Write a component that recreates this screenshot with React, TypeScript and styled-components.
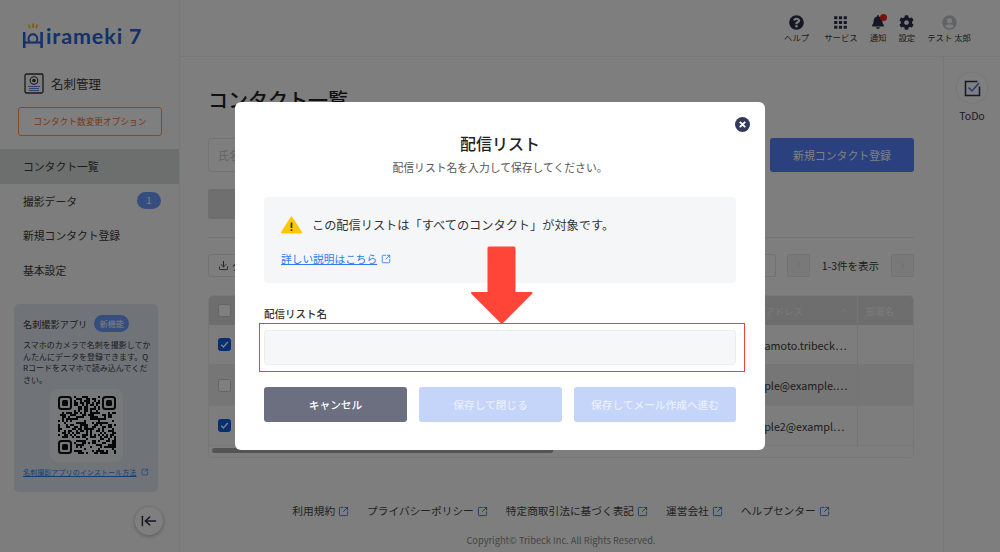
import React from "react"
import styled, { createGlobalStyle } from "styled-components"
import { ArrowLeftToLine, ChevronLeft, ChevronRight, ChevronUp, Download, SquareArrowOutUpRight } from "lucide-react"
import { FaBell, FaCog, FaQuestionCircle, FaUserCircle } from "react-icons/fa"
import { MdApps } from "react-icons/md"

const GlobalStyle = createGlobalStyle`
  html, body {
    margin: 0;
    height: 100%;
    overflow: hidden;
  }
  body {
    font-family: "Noto Sans CJK JP", "Noto Sans", sans-serif;
    color: #3a3a3a;
    background: #fdfdfd;
  }
  * {
    box-sizing: border-box;
  }
`

const Page = styled.div`
  display: flex;
  width: 1000px;
  height: 552px;
  overflow: hidden;
`

const Sidebar = styled.aside`
  width: 180px;
  flex: none;
  padding-top: 21px;
  background: #fbfbfb;
  border-right: 1px solid #f0f0f0;
  display: flex;
  flex-direction: column;
`

const Logo = styled.div`
  display: flex;
  align-items: flex-end;
  height: 28px;
  margin-left: 22px;
  color: #2a62d8;
`

const LogoName = styled.span`
  font-family: "Lato", sans-serif;
  font-size: 21.5px;
  line-height: 26px;
  font-weight: 700;
  letter-spacing: 0.9px;
  margin-left: 2px;
`

const ProductRow = styled.div`
  display: flex;
  align-items: center;
  gap: 7px;
  margin: 23px 0 0 24px;
  font-size: 12.5px;
  height: 22px;
`

const OptionButton = styled.button`
  display: block;
  width: 144px;
  height: 29px;
  margin: 13px 0 13px 18px;
  padding: 0;
  border: 1px solid #ff9a45;
  border-radius: 3px;
  background: #fff;
  color: #f0702a;
  font: inherit;
  font-size: 8.7px;
`

const NavItem = styled.div<{ $active?: boolean }>`
  display: flex;
  align-items: center;
  justify-content: space-between;
  height: 34.5px;
  padding: 0 18px 0 23px;
  font-size: 10.8px;
  background: ${(p) => (p.$active ? "#d8dedb" : "transparent")};
`

const CountBadge = styled.span`
  width: 24px;
  height: 17px;
  border-radius: 9px;
  background: #6a9cff;
  color: #fff;
  font-size: 9.5px;
  line-height: 17px;
  text-align: center;
`

const AppCard = styled.section`
  width: 144px;
  height: 188px;
  margin: 17px 0 0 14px;
  padding: 11px 9px;
  border-radius: 5px;
  background: #e0e8f2;
`

const AppTitle = styled.div`
  display: flex;
  align-items: center;
  gap: 7px;
  font-size: 9.2px;
  height: 17px;
`

const NewPill = styled.span`
  width: 35px;
  height: 17px;
  border-radius: 9px;
  background: #6a9cff;
  color: #fff;
  font-size: 8px;
  line-height: 17px;
  text-align: center;
`

const AppText = styled.p`
  margin: 7px 0 0;
  width: 128px;
  font-size: 8px;
  line-height: 11.5px;
  word-break: break-all;
`

const QrBox = styled.div`
  width: 73px;
  height: 73px;
  margin: 4px 0 0 27px;
  padding: 7px 7.5px;
  border-radius: 8px;
  background: #eef1f5;
  svg {
    display: block;
  }
`

const AppLink = styled.a`
  display: flex;
  align-items: center;
  gap: 5px;
  margin-top: 5px;
  font-size: 7.1px;
  color: #2f7bf0;
  white-space: nowrap;
  span {
    text-decoration: underline;
  }
`

const CollapseButton = styled.button`
  width: 28px;
  height: 28px;
  margin: 15px 0 0 135px;
  padding: 0;
  display: flex;
  align-items: center;
  justify-content: center;
  border: none;
  border-radius: 50%;
  background: #fff;
  color: #2b2f4a;
  box-shadow: 0 1px 4px rgba(0, 0, 0, 0.3);
`

const Main = styled.div`
  flex: 1;
  min-width: 0;
  display: flex;
  flex-direction: column;
`

const Header = styled.header`
  height: 57px;
  flex: none;
  display: flex;
  justify-content: flex-end;
  gap: 12px;
  padding: 14px 29px 0 0;
  border-bottom: 1px solid #f0f0f0;
`

const HeaderItem = styled.div<{ $wide?: boolean }>`
  display: flex;
  flex-direction: column;
  align-items: center;
  gap: 1px;
  margin-left: ${(p) => (p.$wide ? "3px" : "0")};
  font-size: 8.4px;
  line-height: 13px;
  white-space: nowrap;
`

const IconSlot = styled.span`
  position: relative;
  height: 16px;
  display: flex;
  align-items: center;
  color: #2b2f4a;
`

const BellDot = styled.i`
  position: absolute;
  top: 0;
  right: -2px;
  width: 7px;
  height: 7px;
  border-radius: 50%;
  background: #f02020;
`

const Body = styled.div`
  flex: 1;
  min-height: 0;
  display: flex;
`

const Content = styled.main`
  flex: 1;
  min-width: 0;
  padding: 29px 29px 0 28px;
`

const PageTitle = styled.h1`
  margin: 0;
  height: 28px;
  font-size: 20px;
  line-height: 28px;
  font-weight: 500;
  color: #222;
`

const SearchRow = styled.div`
  display: flex;
  justify-content: space-between;
  margin-top: 24px;
`

const SearchInput = styled.div`
  width: 400px;
  height: 34px;
  padding: 0 9px;
  border: 1px solid #e8e8e8;
  border-radius: 3px;
  font-size: 11px;
  line-height: 32px;
  color: #c8c8c8;
`

const PrimaryButton = styled.button`
  width: 144px;
  height: 34px;
  padding: 0;
  border: none;
  border-radius: 3px;
  background: #5480ff;
  color: #fff;
  font: inherit;
  font-size: 10.9px;
`

const FilterButton = styled.div`
  width: 200px;
  height: 30px;
  margin-top: 17px;
  border-radius: 3px;
  background: #dcdedd;
`

const Divider = styled.hr`
  margin: 18px 0 16px;
  border: none;
  border-top: 1px solid #eaeaea;
`

const ToolRow = styled.div`
  display: flex;
  align-items: center;
  height: 23px;
  font-size: 10.5px;
`

const DownloadButton = styled.div`
  display: flex;
  align-items: center;
  gap: 3px;
  height: 23px;
  padding: 0 10px 0 9px;
  border: 1px solid #e4e4e4;
  border-radius: 3px;
`

const Pager = styled.div`
  margin-left: auto;
  display: flex;
  align-items: center;
  gap: 12px;
`

const PageSizeBox = styled.span`
  width: 40px;
  height: 23px;
  margin-right: -1px;
  border: 1px solid #e4e4e4;
  border-radius: 2px;
`

const PageButton = styled.span`
  width: 23px;
  height: 23px;
  display: flex;
  align-items: center;
  justify-content: center;
  border: 1px solid #e4e4e4;
  border-radius: 2px;
  background: #f2f2f2;
  color: #d4d4d4;
`

const Table = styled.div`
  margin-top: 18px;
  height: 163px;
  border: 1px solid #eeeeee;
  border-radius: 5px;
  overflow: hidden;
  position: relative;
`

const TableRow = styled.div<{ $head?: boolean; $shade?: boolean; $h: number }>`
  display: grid;
  grid-template-columns: 28px 1fr 120px 56px;
  height: ${(p) => p.$h}px;
  align-items: center;
  font-size: ${(p) => (p.$head ? "9.4px" : "10.8px")};
  color: ${(p) => (p.$head ? "#f6f6f6" : "#3a3a3a")};
  background: ${(p) => (p.$head ? "#dcdcdc" : p.$shade ? "#ececec" : "#fbfbfb")};
  border-bottom: ${(p) => (p.$head ? "none" : "1px solid #eeeeee")};
`

const CheckBox = styled.span<{ $checked?: boolean }>`
  width: 13px;
  height: 13px;
  margin-left: 9px;
  display: flex;
  align-items: center;
  justify-content: center;
  border-radius: 2.5px;
  border: 1px solid ${(p) => (p.$checked ? "#0b5fe0" : "#c8c8c8")};
  background: ${(p) => (p.$checked ? "#0b5fe0" : "#fff")};
`

const MailCell = styled.span`
  padding-left: 6px;
  white-space: nowrap;
`

const MailHead = styled.span`
  display: flex;
  align-items: center;
  justify-content: space-between;
  padding-right: 8px;
`

const DeptCell = styled.span`
  height: 100%;
  padding-left: 8px;
  display: flex;
  align-items: center;
  border-left: 1px solid #e8e8e8;
`

const ScrollThumb = styled.div`
  position: absolute;
  left: 3px;
  bottom: 4px;
  width: 341px;
  height: 5px;
  border-radius: 3px;
  background: #a8a8a8;
`

const Footer = styled.footer`
  margin-top: 45px;
  text-align: center;
`

const FooterLinks = styled.div`
  display: flex;
  justify-content: center;
  gap: 18px;
  font-size: 10.7px;
  line-height: 16px;
`

const FooterLink = styled.a`
  display: flex;
  align-items: center;
  gap: 3px;
  color: #444;
  svg {
    color: #2f6fe8;
  }
`

const Copyright = styled.div`
  margin-top: 15px;
  font-size: 9.3px;
  line-height: 13px;
  color: #8a8a8a;
`

const TodoRail = styled.aside`
  width: 57px;
  flex: none;
  padding-top: 16px;
  border-left: 1px solid #f0f0f0;
  display: flex;
  flex-direction: column;
  align-items: center;
  font-size: 10.5px;
`

const TodoCircle = styled.div`
  width: 30px;
  height: 30px;
  border-radius: 50%;
  background: #fff;
  box-shadow: 0 0 3px rgba(0, 0, 0, 0.12);
  display: flex;
  align-items: center;
  justify-content: center;
  margin-bottom: 5px;
`

const Overlay = styled.div`
  position: fixed;
  inset: 0;
  background: rgba(0, 0, 0, 0.5);
  display: flex;
  align-items: center;
  justify-content: center;
`

const Modal = styled.div`
  position: relative;
  width: 530px;
  height: 348px;
  padding: 29px 29px 0;
  border-radius: 6px;
  background: #fff;
`

const CloseIcon = styled.svg`
  position: absolute;
  top: 15px;
  right: 15px;
`

const ModalTitle = styled.h2`
  margin: 0;
  font-size: 16px;
  line-height: 24px;
  font-weight: 500;
  text-align: center;
  color: #222;
`

const ModalSub = styled.p`
  margin: 4px 0 0;
  font-size: 10.8px;
  line-height: 16px;
  text-align: center;
  color: #555;
`

const Notice = styled.div`
  height: 86px;
  margin-top: 22px;
  padding: 17px 17px 0;
  border-radius: 4px;
  background: #f5f6f8;
`

const NoticeRow = styled.div`
  display: flex;
  align-items: center;
  gap: 10px;
  height: 22px;
  font-size: 12.2px;
  color: #333;
`

const NoticeLink = styled.a`
  display: flex;
  align-items: center;
  gap: 4px;
  margin-top: 15px;
  font-size: 10.7px;
  line-height: 16px;
  color: #2f7bf0;
  span {
    text-decoration: underline;
  }
`

const FieldLabel = styled.label`
  display: block;
  margin-top: 23px;
  font-size: 10.5px;
  line-height: 16px;
  font-weight: 500;
  color: #333;
`

const FieldInput = styled.div`
  height: 35px;
  margin-top: 8px;
  border: 1px solid #eceef0;
  border-radius: 3px;
  background: #f6f7f9;
`

const Actions = styled.div`
  display: grid;
  grid-template-columns: 143px 143px 1fr;
  gap: 12px;
  margin-top: 22px;
`

const ActionButton = styled.button<{ $cancel?: boolean }>`
  height: 35px;
  padding: 0;
  border: none;
  border-radius: 3px;
  background: ${(p) => (p.$cancel ? "#6c6f80" : "#c5d5f9")};
  color: ${(p) => (p.$cancel ? "#fff" : "#e9effd")};
  font: inherit;
  font-size: 10.7px;
  font-weight: 500;
`

const Highlight = styled.div`
  position: absolute;
  left: 24px;
  top: 221px;
  width: 486px;
  height: 49px;
  border: 1px solid #ef4136;
  pointer-events: none;
`

const ArrowMark = styled.svg`
  position: absolute;
  left: 235px;
  top: 144px;
`

const CardIcon = () => (
  <svg width="20" height="21" viewBox="0 0 20 21" fill="none">
    <rect x="1" y="1" width="18" height="19" rx="1.5" stroke="#333" strokeWidth="1.3" />
    <circle cx="10" cy="7.5" r="3.8" stroke="#333" strokeWidth="1.1" />
    <circle cx="10" cy="7.5" r="1.8" fill="#333" />
    <path d="M4 13.5h12M5 15.5h10M5 17.5h10" stroke="#5f86d8" strokeWidth="1" />
  </svg>
)

const LogoMark = () => (
  <svg width="22" height="26" viewBox="0 0 22 26" fill="none">
    <path d="M2.2 9v16M19.6 9v16" stroke="#2a62d8" strokeWidth="2.6" />
    <path d="M2.2 19.5h17.4" stroke="#2a62d8" strokeWidth="2.2" />
    <path d="M7.5 18.5a4.4 4.4 0 1 1 6.8 0" stroke="#2a62d8" strokeWidth="2.1" />
    <path d="M6.5 1.5l1.5 3.6M11 0.5v4.4M15.5 1.5l-1.6 3.6" stroke="#f2c230" strokeWidth="1.9" />
  </svg>
)

// not a real code, just looks like one at this size
const qrFill = (x: number, y: number) => {
  const n = (x * 7919 + y * 104729 + x * y * 31) % 97
  return n % 5 < 2 || (x + y * 3) % 7 === 0
}

const inFinder = (x: number, y: number) =>
  (x < 8 && y < 8) || (x > 20 && y < 8) || (x < 8 && y > 20)

const QrCode = () => {
  const cells: React.ReactNode[] = []
  for (let y = 0; y < 29; y++) {
    for (let x = 0; x < 29; x++) {
      if (!inFinder(x, y) && qrFill(x, y)) {
        cells.push(<rect key={`${x}-${y}`} x={x * 2} y={y * 2} width="2" height="2" fill="#111" />)
      }
    }
  }
  const finders = [
    [0, 0],
    [44, 0],
    [0, 44],
  ]
  return (
    <svg width="58" height="58" viewBox="0 0 58 58">
      {cells}
      {finders.map(([fx, fy]) => (
        <g key={`${fx}-${fy}`}>
          <rect x={fx + 1} y={fy + 1} width="12" height="12" rx="2.5" fill="none" stroke="#111" strokeWidth="2" />
          <rect x={fx + 4} y={fy + 4} width="6" height="6" rx="1.5" fill="#111" />
        </g>
      ))}
    </svg>
  )
}

const Check = () => (
  <svg width="9" height="9" viewBox="0 0 9 9" fill="none">
    <path d="M1.2 4.8l2.2 2.2 4.4-5" stroke="#fff" strokeWidth="1.4" />
  </svg>
)

const footerLinks = ["利用規約", "プライバシーポリシー", "特定商取引法に基づく表記", "運営会社", "ヘルプセンター"]

const App = () => (
  <>
    <GlobalStyle />
    <Page>
      <Sidebar>
        <Logo>
          <LogoMark />
          <LogoName>irameki 7</LogoName>
        </Logo>
        <ProductRow>
          <CardIcon />
          名刺管理
        </ProductRow>
        <OptionButton>コンタクト数変更オプション</OptionButton>
        <NavItem $active>コンタクト一覧</NavItem>
        <NavItem>
          撮影データ
          <CountBadge>1</CountBadge>
        </NavItem>
        <NavItem>新規コンタクト登録</NavItem>
        <NavItem>基本設定</NavItem>
        <AppCard>
          <AppTitle>
            名刺撮影アプリ
            <NewPill>新機能</NewPill>
          </AppTitle>
          <AppText>スマホのカメラで名刺を撮影してかんたんにデータを登録できます。QRコードをスマホで読み込んでください。</AppText>
          <QrBox>
            <QrCode />
          </QrBox>
          <AppLink>
            <span>名刺撮影アプリのインストール方法</span>
            <SquareArrowOutUpRight size={8} />
          </AppLink>
        </AppCard>
        <CollapseButton>
          <ArrowLeftToLine size={16} style={{ transform: "scaleX(1.1)" }} />
        </CollapseButton>
      </Sidebar>
      <Main>
        <Header>
          <HeaderItem>
            <IconSlot>
              <FaQuestionCircle size={15} />
            </IconSlot>
            ヘルプ
          </HeaderItem>
          <HeaderItem $wide>
            <IconSlot>
              <MdApps size={19} />
            </IconSlot>
            サービス
          </HeaderItem>
          <HeaderItem>
            <IconSlot>
              <FaBell size={14} />
              <BellDot />
            </IconSlot>
            通知
          </HeaderItem>
          <HeaderItem>
            <IconSlot>
              <FaCog size={15} />
            </IconSlot>
            設定
          </HeaderItem>
          <HeaderItem>
            <IconSlot style={{ color: "#c4c6cc" }}>
              <FaUserCircle size={15} />
            </IconSlot>
            テスト 太郎
          </HeaderItem>
        </Header>
        <Body>
          <Content>
            <PageTitle>コンタクト一覧</PageTitle>
            <SearchRow>
              <SearchInput>氏名</SearchInput>
              <PrimaryButton>新規コンタクト登録</PrimaryButton>
            </SearchRow>
            <FilterButton />
            <Divider />
            <ToolRow>
              <DownloadButton>
                <Download size={11} />
                ダウンロード
              </DownloadButton>
              <Pager>
                <PageSizeBox />
                <PageButton>
                  <ChevronLeft size={9} />
                </PageButton>
                1-3件を表示
                <PageButton>
                  <ChevronRight size={9} />
                </PageButton>
              </Pager>
            </ToolRow>
            <Table>
              <TableRow $head $h={29}>
                <CheckBox />
                <span />
                <MailHead>
                  メールアドレス
                  <ChevronUp size={11} />
                </MailHead>
                <DeptCell>部署名</DeptCell>
              </TableRow>
              <TableRow $h={40}>
                <CheckBox $checked>
                  <Check />
                </CheckBox>
                <span />
                <MailCell>yamamoto.tribeck⋯</MailCell>
                <DeptCell />
              </TableRow>
              <TableRow $shade $h={41}>
                <CheckBox />
                <span />
                <MailCell>sample@example.⋯</MailCell>
                <DeptCell />
              </TableRow>
              <TableRow $h={40}>
                <CheckBox $checked>
                  <Check />
                </CheckBox>
                <span />
                <MailCell>sample2@exampl⋯</MailCell>
                <DeptCell />
              </TableRow>
              <ScrollThumb />
            </Table>
            <Footer>
              <FooterLinks>
                {footerLinks.map((label) => (
                  <FooterLink key={label}>
                    {label}
                    <SquareArrowOutUpRight size={11} />
                  </FooterLink>
                ))}
              </FooterLinks>
              <Copyright>Copyright© Tribeck Inc. All Rights Reserved.</Copyright>
            </Footer>
          </Content>
          <TodoRail>
            <TodoCircle>
              <svg width="17" height="17" viewBox="0 0 17 17" fill="none">
                <path d="M15.5 6.5v9h-14v-14h12" stroke="#2b2f4a" strokeWidth="1.5" />
                <path d="M4.5 7.5l3.5 3.5 7-8" stroke="#3f78ea" strokeWidth="1.5" />
              </svg>
            </TodoCircle>
            ToDo
          </TodoRail>
        </Body>
      </Main>
    </Page>
    <Overlay>
      <Modal>
        <CloseIcon width="15" height="15" viewBox="0 0 15 15">
          <circle cx="7.5" cy="7.5" r="7.5" fill="#33395a" />
          <path d="M4.8 4.8l5.4 5.4M10.2 4.8l-5.4 5.4" stroke="#fff" strokeWidth="1.9" />
        </CloseIcon>
        <ModalTitle>配信リスト</ModalTitle>
        <ModalSub>配信リスト名を入力して保存してください。</ModalSub>
        <Notice>
          <NoticeRow>
            <svg width="21" height="18" viewBox="0 0 21 18">
              <path d="M10.5 1.5L20 16.5H1z" fill="#ffc800" stroke="#ffc800" strokeWidth="2" strokeLinejoin="round" />
              <path d="M10.5 6.5v5.5M10.5 13.2v1.8" stroke="#3a3320" strokeWidth="1.7" />
            </svg>
            この配信リストは「すべてのコンタクト」が対象です。
          </NoticeRow>
          <NoticeLink>
            <span>詳しい説明はこちら</span>
            <SquareArrowOutUpRight size={10} />
          </NoticeLink>
        </Notice>
        <FieldLabel>配信リスト名</FieldLabel>
        <FieldInput />
        <Actions>
          <ActionButton $cancel>キャンセル</ActionButton>
          <ActionButton>保存して閉じる</ActionButton>
          <ActionButton>保存してメール作成へ進む</ActionButton>
        </Actions>
        <Highlight />
        <ArrowMark width="64" height="80" viewBox="0 0 64 80">
          <path
            d="M19 .5h25a1.5 1.5 0 0 1 1.5 1.5V46h16a1 1 0 0 1 .7 1.7L32.5 77.5a1 1 0 0 1-1.4 0L1.3 47.7A1 1 0 0 1 2 46h15.5V2A1.5 1.5 0 0 1 19 .5z"
            fill="#ff4438"
          />
        </ArrowMark>
      </Modal>
    </Overlay>
  </>
)

export default App
